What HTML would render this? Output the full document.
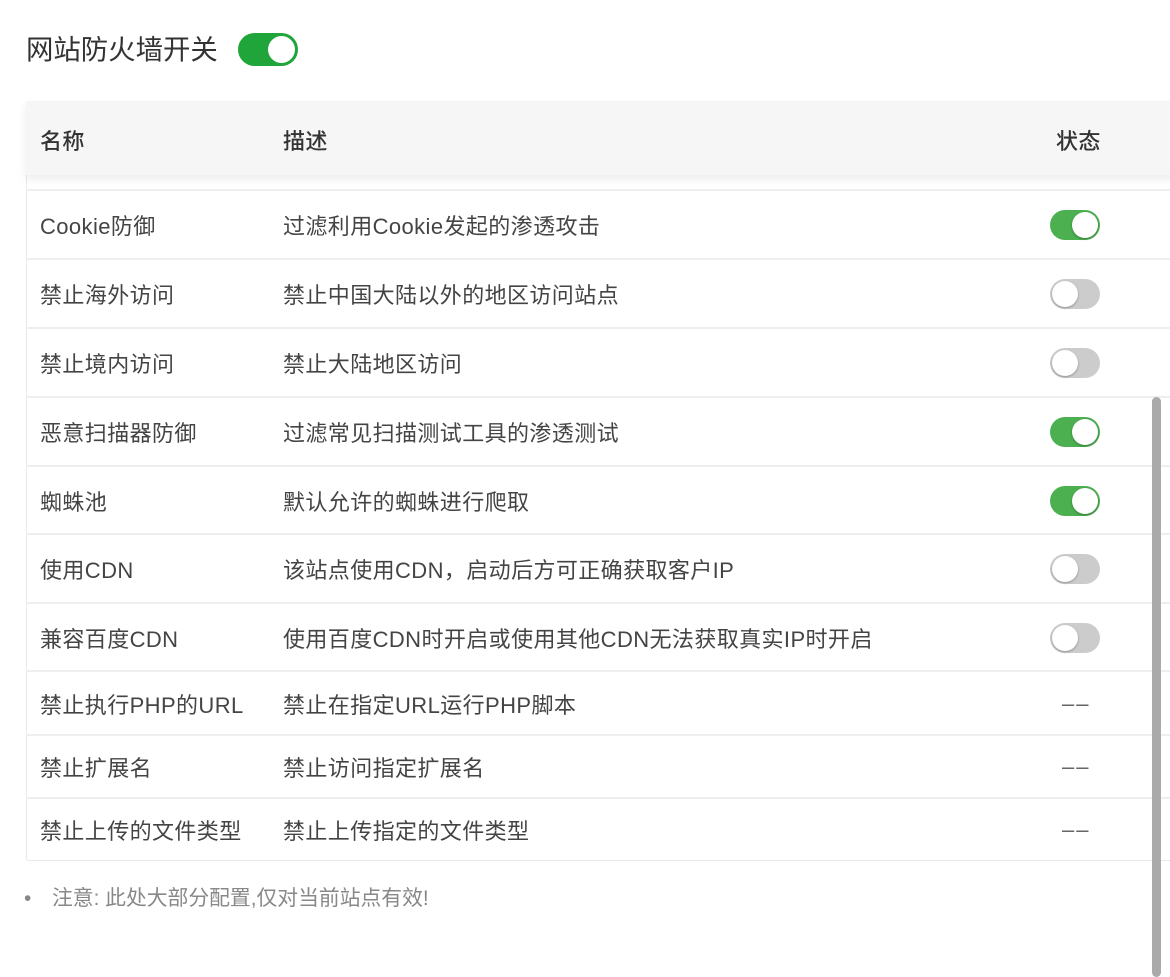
<!DOCTYPE html>
<html><head><meta charset="utf-8"><style>
body{margin:0;width:1170px;height:966px;background:#fff;overflow:hidden;position:relative;font-family:"Liberation Sans","Noto Sans CJK SC",sans-serif;color:#333}
.t{position:absolute;left:26px;top:31px;font-size:27.4px;color:#333;line-height:38px}
.tg{position:absolute;left:238px;top:33px;width:60px;height:33px;border-radius:17px;background:#20a53a}
.tg::after{content:"";position:absolute;right:3px;top:3px;width:27px;height:27px;border-radius:50%;background:#fff}
.tab{position:absolute;left:26px;top:101px;width:1160px;height:760px;border:1px solid #e8e8e8;border-radius:3px;box-sizing:border-box}
.hd{position:absolute;left:26px;top:101px;width:1150px;height:74px;background:#f6f6f6;box-shadow:0 4px 8px rgba(0,0,0,.08);font-size:22px;font-weight:500;color:#333;letter-spacing:.4px}
.c1{position:absolute;left:14px}.c2{position:absolute;left:257px}.c3{position:absolute;left:1030px}
.r{position:absolute;left:26px;width:1150px;border-top:2px solid #eee;font-size:22px;letter-spacing:.4px;color:#444}
.r span{position:absolute;top:50%;transform:translateY(-50%)}
.sw{position:absolute;left:1024px;top:50%;margin-top:-15px;width:50px;height:30px;border-radius:15px;background:#ccc}
.sw::after{content:"";position:absolute;left:2px;top:2px;width:26px;height:26px;border-radius:50%;background:#fff;box-shadow:0 1px 2px rgba(0,0,0,.3)}
.sw.on{background:#4caf50}.sw.on::after{left:22px}
.d{left:1036px!important;color:#666;letter-spacing:2px}
.sb{position:absolute;left:1152px;top:397px;width:9px;height:580px;border-radius:5px;background:#aaa}
.note{position:absolute;left:24px;top:881px;font-size:20.8px;color:#888}
.note i{font-style:normal;display:inline-block;width:28px}
</style></head><body>
<div class="t">网站防火墙开关</div><div class="tg"></div>
<div class="tab"></div>
<div class="hd"><span class="c1" style="top:23px">名称</span><span class="c2" style="top:23px">描述</span><span class="c3" style="top:23px">状态</span></div>
<div class="r" style="top:189px;height:68px"><span class="c1">Cookie防御</span><span class="c2">过滤利用Cookie发起的渗透攻击</span><div class="sw on"></div></div>
<div class="r" style="top:258px;height:68px"><span class="c1">禁止海外访问</span><span class="c2">禁止中国大陆以外的地区访问站点</span><div class="sw"></div></div>
<div class="r" style="top:327px;height:68px"><span class="c1">禁止境内访问</span><span class="c2">禁止大陆地区访问</span><div class="sw"></div></div>
<div class="r" style="top:396px;height:68px"><span class="c1">恶意扫描器防御</span><span class="c2">过滤常见扫描测试工具的渗透测试</span><div class="sw on"></div></div>
<div class="r" style="top:465px;height:67px"><span class="c1">蜘蛛池</span><span class="c2">默认允许的蜘蛛进行爬取</span><div class="sw on"></div></div>
<div class="r" style="top:533px;height:68px"><span class="c1">使用CDN</span><span class="c2">该站点使用CDN，启动后方可正确获取客户IP</span><div class="sw"></div></div>
<div class="r" style="top:602px;height:67px"><span class="c1">兼容百度CDN</span><span class="c2">使用百度CDN时开启或使用其他CDN无法获取真实IP时开启</span><div class="sw"></div></div>
<div class="r" style="top:670px;height:63px"><span class="c1">禁止执行PHP的URL</span><span class="c2">禁止在指定URL运行PHP脚本</span><span class="c3 d">––</span></div>
<div class="r" style="top:734px;height:62px"><span class="c1">禁止扩展名</span><span class="c2">禁止访问指定扩展名</span><span class="c3 d">––</span></div>
<div class="r" style="top:797px;height:62px"><span class="c1">禁止上传的文件类型</span><span class="c2">禁止上传指定的文件类型</span><span class="c3 d">––</span></div>
<div class="sb"></div>
<div class="note"><i>•</i>注意: 此处大部分配置,仅对当前站点有效!</div>
</body></html>
